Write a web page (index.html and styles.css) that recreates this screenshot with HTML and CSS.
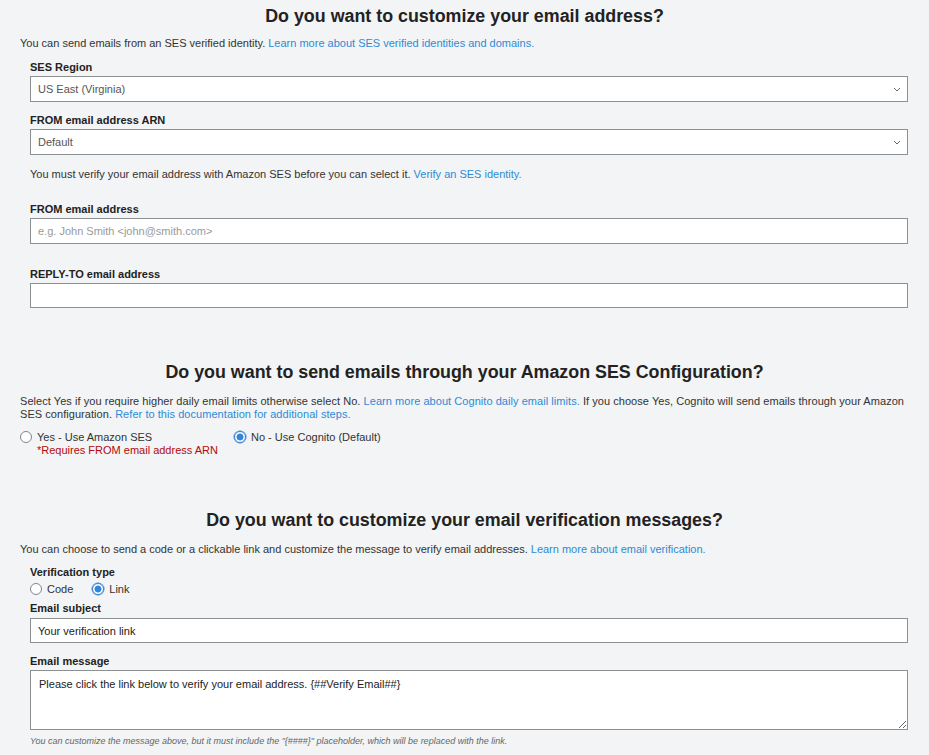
FILE: index.html
```html
<!DOCTYPE html>
<html lang="en">
<head>
<meta charset="utf-8">
<title>Email settings</title>
<link rel="stylesheet" href="styles.css">
</head>
<body>
<main class="page">
  <section class="sec sec-first">
    <h2 class="title">Do you want to customize your email address?</h2>
    <p class="intro">You can send emails from an SES verified identity. <a href="#">Learn more about SES verified identities and domains.</a></p>
    <div class="fields">
      <label class="label l-first">SES Region</label>
      <div class="select-wrap">
        <select class="control"><option>US East (Virginia)</option></select>
        <svg class="chev" width="8" height="5" viewBox="0 0 8 5"><path d="M1 1l3 3 3-3" fill="none" stroke="#666" stroke-width="1"/></svg>
      </div>
      <label class="label l-mid">FROM email address ARN</label>
      <div class="select-wrap">
        <select class="control"><option>Default</option></select>
        <svg class="chev" width="8" height="5" viewBox="0 0 8 5"><path d="M1 1l3 3 3-3" fill="none" stroke="#666" stroke-width="1"/></svg>
      </div>
      <p class="note">You must verify your email address with Amazon SES before you can select it. <a href="#">Verify an SES identity.</a></p>
      <label class="label l-far">FROM email address</label>
      <input class="control" type="text" placeholder="e.g. John Smith &lt;john@smith.com&gt;">
      <label class="label l-far2">REPLY-TO email address</label>
      <input class="control c-short" type="text">
    </div>
  </section>

  <section class="sec sec-second">
    <h2 class="title">Do you want to send emails through your Amazon SES Configuration?</h2>
    <p class="intro intro-2">Select Yes if you require higher daily email limits otherwise select No. <a href="#">Learn more about Cognito daily email limits.</a> If you choose Yes, Cognito will send emails through your Amazon SES configuration. <a href="#">Refer to this documentation for additional steps.</a></p>
    <div class="choice-row">
      <div class="choice choice-yes">
        <label class="radio-line"><input type="radio" name="ses" class="radio"><span>Yes - Use Amazon SES</span></label>
        <div class="req">*Requires FROM email address ARN</div>
      </div>
      <div class="choice">
        <label class="radio-line"><input type="radio" name="ses" class="radio" checked><span>No - Use Cognito (Default)</span></label>
      </div>
    </div>
  </section>

  <section class="sec sec-third">
    <h2 class="title">Do you want to customize your email verification messages?</h2>
    <p class="intro">You can choose to send a code or a clickable link and customize the message to verify email addresses. <a href="#">Learn more about email verification.</a></p>
    <div class="fields">
      <label class="label l-type">Verification type</label>
      <div class="type-row">
        <label class="radio-line rl-code"><input type="radio" name="vt" class="radio"><span>Code</span></label>
        <label class="radio-line"><input type="radio" name="vt" class="radio" checked><span>Link</span></label>
      </div>
      <label class="label l-subject">Email subject</label>
      <input class="control c-dark" type="text" value="Your verification link">
      <label class="label l-msg">Email message</label>
      <textarea class="control area">Please click the link below to verify your email address. {##Verify Email##}</textarea>
      <p class="help">You can customize the message above, but it must include the "{####}" placeholder, which will be replaced with the link.</p>
    </div>
  </section>
</main>
</body>
</html>
```

FILE: styles.css
```css
* { box-sizing: border-box; }
html, body { margin: 0; padding: 0; }
body {
  background: #f2f4f5;
  font-family: "Liberation Sans", Arial, Helvetica, sans-serif;
  color: #333;
  font-size: 11px;
  width: 929px;
  height: 755px;
  overflow: hidden;
}
a { color: #2e8ad5; text-decoration: none; }
.page { padding: 0 20px 0 20px; }
.sec { display: flex; flex-direction: column; }
.sec-first { padding-top: 5px; }
.sec-second { padding-top: 53px; }
.sec-third { padding-top: 53px; }
.title {
  margin: 0;
  text-align: center;
  font-size: 17.85px;
  line-height: 22px;
  font-weight: bold;
  color: #222;
}
.intro { margin: 9px 0 0 0; line-height: 14px; }
.sec-second .intro-2 { margin-top: 12px; line-height: 13px; letter-spacing: 0.05px; }
.sec-third .intro { margin-top: 11px; }
.fields { display: flex; flex-direction: column; padding: 0 1px 0 10px; }
.label { display: block; font-weight: bold; line-height: 14px; color: #222; margin-bottom: 2px; }
.l-first { margin-top: 10px; }
.l-type { margin-top: 9px; }
.l-mid { margin-top: 11px; }
.l-far { margin-top: 21px; }
.l-far2 { margin-top: 23px; }
.l-subject { margin-top: 5px; margin-bottom: 3px; }
.l-msg { margin-top: 11px; margin-bottom: 2px; }
.control {
  display: block;
  width: 100%;
  height: 26px;
  border: 1px solid #8b9093;
  background: #fff;
  font-family: "Liberation Sans", Arial, Helvetica, sans-serif;
  font-size: 11px;
  color: #555;
  padding: 0 7px;
  margin: 0;
  border-radius: 0;
  outline: none;
}
.c-short { height: 25px; }
.c-dark { color: #222; height: 25px; }
.control::placeholder { color: #9a9a9a; }
select.control { -webkit-appearance: none; appearance: none; }
.select-wrap { position: relative; }
.chev { position: absolute; right: 7px; top: 11px; }
.note { margin: 12px 0 0 0; line-height: 14px; }
.area {
  height: 60px;
  padding: 6px 8px;
  line-height: 14px;
  color: #222;
  resize: vertical;
}
.help {
  margin: 5px 0 0 0;
  font-size: 9px;
  font-style: italic;
  color: #666;
  line-height: 12px;
}
.choice-row { display: flex; margin-top: 9px; }
.choice-yes { width: 214px; }
.radio-line { display: flex; align-items: center; line-height: 14px; }
.radio {
  -webkit-appearance: none;
  appearance: none;
  width: 12px;
  height: 12px;
  margin: 0 5px 0 0;
  border: 1px solid #7f868a;
  border-radius: 50%;
  background: #fff;
  flex: none;
}
.radio:checked {
  border-color: #2f7fd0;
  background: radial-gradient(circle, #2f86dc 0 3.2px, #fff 3.8px);
  box-shadow: 0 0 0 0.5px #2f7fd0;
}
.req { color: #b30b0b; line-height: 12px; padding-left: 17px; margin-top: 0; }
.type-row { display: flex; margin-top: 1px; }
.rl-code { margin-right: 19px; }
```
